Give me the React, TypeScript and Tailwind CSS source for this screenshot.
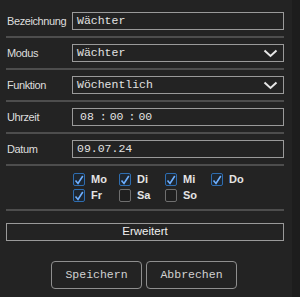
import { ReactNode } from 'react';

const mono = { fontFamily: '"Liberation Mono", "Courier New", monospace' };
const sans = { fontFamily: '"Liberation Sans", Arial, sans-serif' };

function Chevron() {
  return (
    <svg width="15" height="9" viewBox="0 0 15 9" className="shrink-0 mr-[1px]">
      <path d="M1.5 1.5 L7.5 7 L13.5 1.5" fill="none" stroke="#e6e6e6" strokeWidth="2" />
    </svg>
  );
}

function Row({ label, children }: { label: string; children: ReactNode }) {
  return (
    <div>
      <div className="flex items-center h-[18px]">
        <div className="w-[66px] pl-[1px] text-[11px] tracking-[-0.4px] text-[#dedede]" style={sans}>
          {label}
        </div>
        {children}
      </div>
      <div className="h-[2px] bg-[#4d4d4d] mt-[6px] mb-[6px]" />
    </div>
  );
}

function Field({ value, select }: { value: string; select?: boolean }) {
  return (
    <div className="flex-1 h-[18px] border-[1.5px] border-[#9a9a9a] flex items-center pl-[4px] pr-[4px]">
      <span className="flex-1 text-[11.5px] text-[#e2e2e2] leading-none" style={mono}>
        {value}
      </span>
      {select && <Chevron />}
    </div>
  );
}

function Check({ label, checked }: { label: string; checked?: boolean }) {
  return (
    <div className="flex items-center gap-[6px] h-[13px]">
      <span
        className={
          checked
            ? 'w-[12px] h-[13px] rounded-[2px] border border-[#2e6db0] bg-[#1d2630] flex items-center justify-center'
            : 'w-[12px] h-[13px] rounded-[2px] border border-[#6f6f6f] bg-[#1f1f1f]'
        }
      >
        {checked && (
          <svg width="10" height="10" viewBox="0 0 10 10">
            <path d="M1.5 5.5 L4 8.5 L8.8 1" fill="none" stroke="#6fb0ff" strokeWidth="1.6" />
          </svg>
        )}
      </span>
      <span className="text-[11px] font-bold text-[#e4e4e4]" style={sans}>
        {label}
      </span>
    </div>
  );
}

export default function App() {
  return (
    <div className="w-[300px] h-[297px] bg-[#1d1d1d] overflow-hidden">
      <div className="w-[292px] h-[297px] bg-[#232323] pt-[12px] pl-[6px] pr-[8px]">
        <Row label="Bezeichnung">
          <Field value="Wächter" />
        </Row>
        <Row label="Modus">
          <Field value="Wächter" select />
        </Row>
        <Row label="Funktion">
          <Field value="Wöchentlich" select />
        </Row>
        <Row label="Uhrzeit">
          <div className="flex-1 h-[18px] border-[1.5px] border-[#9a9a9a] flex items-center pl-[7px] text-[11.5px] text-[#e2e2e2] leading-none" style={mono}>
            <span>08</span>
            <span className="ml-[6px]">:</span>
            <span className="ml-[3px]">00</span>
            <span className="ml-[5px]">:</span>
            <span className="ml-[3px]">00</span>
          </div>
        </Row>
        <Row label="Datum">
          <Field value="09.07.24" />
        </Row>

        <div className="grid grid-cols-[46px_46px_46px_46px] gap-y-[3px] pl-[67px] pt-[1px] pb-[7px]">
          <Check label="Mo" checked />
          <Check label="Di" checked />
          <Check label="Mi" checked />
          <Check label="Do" checked />
          <Check label="Fr" checked />
          <Check label="Sa" />
          <Check label="So" />
        </div>

        <div className="h-[2px] bg-[#4d4d4d]" />

        <div
          className="mt-[12px] h-[18px] border-[1.5px] border-[#9a9a9a] flex items-center justify-center text-[11.5px] text-[#f0f0f0]"
          style={sans}
        >
          Erweitert
        </div>

        <div className="flex gap-[4px] pl-[45px] mt-[20px]">
          <button
            className="w-[91px] h-[28px] rounded-[4px] border-[1.5px] border-[#8f8f8f] text-[11.5px] text-[#d2d2d2]"
            style={mono}
          >
            Speichern
          </button>
          <button
            className="w-[91px] h-[28px] rounded-[4px] border-[1.5px] border-[#8f8f8f] text-[11.5px] text-[#d2d2d2]"
            style={mono}
          >
            Abbrechen
          </button>
        </div>
      </div>
    </div>
  );
}
